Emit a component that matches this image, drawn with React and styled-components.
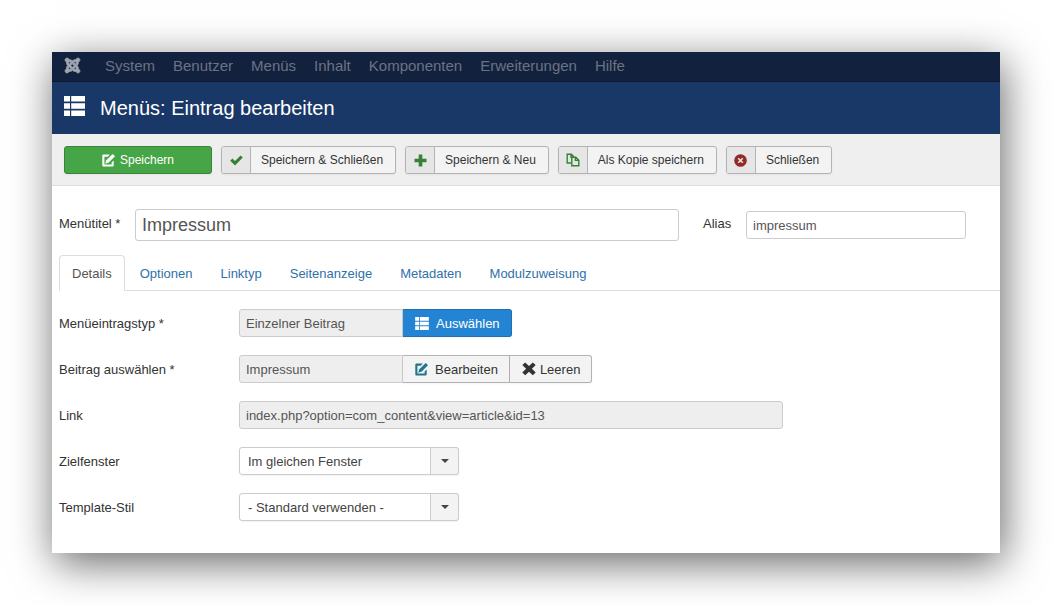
import React from "react";
import styled, { createGlobalStyle } from "styled-components";
import { FaJoomla } from "react-icons/fa";

const GlobalStyle = createGlobalStyle`
  *, *::before, *::after {
    box-sizing: border-box;
  }
  body {
    margin: 0;
    background: #fff;
    color: #333;
    font: 13px/19px "Liberation Sans", Arial, sans-serif;
  }
  button, input, select {
    font: inherit;
    margin: 0;
  }
`;

const Page = styled.div`
  padding: 52px;
`;

const Frame = styled.div`
  background: #fff;
  box-shadow: 3px 10px 40px rgba(0, 0, 0, 0.6);
`;

const Navbar = styled.nav`
  display: flex;
  align-items: center;
  gap: 18px;
  height: 30px;
  padding: 0 12px 2px;
  background: #12223e;
  border-bottom: 1px solid #0b1830;
`;

const Brand = styled.a`
  display: flex;
  margin-right: 6px;
  color: #a0a6b2;
  font-size: 17px;

  svg {
    overflow: visible;
    stroke: currentColor;
    stroke-width: 24px;
  }
`;

const NavLink = styled.a`
  color: #6b7382;
  font-size: 15px;
  line-height: 20px;
  text-decoration: none;
`;

const Header = styled.header`
  display: flex;
  align-items: center;
  gap: 15px;
  height: 52px;
  padding: 0 12px;
  background: #1a3867;
  color: #fff;

  svg {
    margin-bottom: 4px;
  }
`;

const Title = styled.h1`
  margin: 0;
  font-size: 20px;
  font-weight: normal;
  line-height: 24px;
`;

const Toolbar = styled.div`
  display: flex;
  flex-wrap: wrap;
  gap: 9px;
  padding: 12px 12px 11px;
  background: #efefef;
  border-bottom: 1px solid #dedede;
`;

const Button = styled.button`
  display: inline-flex;
  align-items: center;
  height: 28px;
  padding: 0;
  border: 1px solid #b3b3b3;
  border-radius: 3px;
  background: #f3f3f3;
  color: #333;
  box-shadow: 0 1px 2px rgba(0, 0, 0, 0.05);
  cursor: pointer;
`;

const ToolbarButton = styled(Button)`
  font-size: 12px;
`;

const SaveButton = styled(ToolbarButton)`
  justify-content: center;
  gap: 5px;
  width: 148px;
  border-color: #398439;
  background: #46a546;
  color: #fff;
`;

const ButtonIcon = styled.span`
  display: flex;
  align-items: center;
  justify-content: center;
  align-self: stretch;
  width: 29px;
  border-right: 1px solid #b3b3b3;
  border-radius: 2px 0 0 2px;
  background: #e6e6e6;
  color: ${(props) => props.$color};
`;

const ButtonText = styled.span`
  padding: 0 12px 0 10px;
`;

const TitleRow = styled.div`
  display: flex;
  align-items: center;
  padding: 23px 7px 14px;
`;

const TitleLabel = styled.label`
  flex: none;
  width: 76px;
  padding-bottom: 3px;
`;

const AliasLabel = styled(TitleLabel)`
  width: 43px;
  margin-left: 24px;
`;

const Input = styled.input`
  flex: 0 1 ${(props) => props.$width}px;
  min-width: 0;
  height: 28px;
  padding: 0 6px;
  border: 1px solid #ccc;
  border-radius: 3px;
  background: #fff;
  color: #555;

  &:read-only {
    background: #eee;
  }
`;

const LargeInput = styled(Input)`
  height: 32px;
  font-size: 18px;
`;

const Tabs = styled.div`
  display: flex;
  gap: 2px;
  margin-left: 7px;
  border-bottom: 1px solid #ddd;
`;

const Tab = styled.button`
  height: 36px;
  margin-bottom: -1px;
  padding: 1px 12px 0;
  border: 1px solid ${(props) => (props.$active ? "#ddd" : "transparent")};
  border-bottom-color: ${(props) => (props.$active ? "#fff" : "transparent")};
  border-radius: 4px 4px 0 0;
  background: ${(props) => (props.$active ? "#fff" : "transparent")};
  color: ${(props) => (props.$active ? "#555" : "#3071a9")};
  cursor: pointer;
`;

const Fields = styled.div`
  display: flex;
  flex-direction: column;
  gap: 18px;
  padding: 18px 7px 32px;
`;

const Row = styled.div`
  display: flex;
  align-items: center;
`;

const RowLabel = styled.label`
  flex: none;
  width: 180px;
  padding-top: 1px;
`;

const GroupInput = styled(Input)`
  border-radius: 3px 0 0 3px;
`;

const GroupButton = styled(Button)`
  gap: ${(props) => (props.$tight ? 4 : 7)}px;
  padding: 0 11px 0 12px;
  border-left: 0;
  border-radius: ${(props) => (props.$last ? "0 3px 3px 0" : "0")};
`;

const SelectButton = styled(GroupButton)`
  border-color: #1f6fb2;
  background: #2384d3;
  color: #fff;
`;

const SelectBox = styled.div`
  display: grid;
  grid-template-columns: 1fr 29px;
  flex: 0 1 220px;
  height: 28px;
  border-radius: 3px;
  box-shadow: 0 1px 2px rgba(0, 0, 0, 0.05);
`;

const Select = styled.select`
  grid-area: 1 / 1 / 2 / 3;
  appearance: none;
  padding: 1px 36px 0 8px;
  border: 1px solid #ccc;
  border-radius: 3px;
  background: #fff;
  color: #444;
`;

const SelectArrow = styled.span`
  grid-area: 1 / 2;
  display: flex;
  align-items: center;
  justify-content: center;
  border: 1px solid #ccc;
  border-radius: 0 3px 3px 0;
  background: #f3f3f3;
  pointer-events: none;
`;

const ListIcon = ({ width, height }) => (
  <svg width={width} height={height} viewBox="0 0 21 20" fill="currentColor">
    <path d="M0 0h6v5.6H0zM7.2 0H21v5.6H7.2zM0 7.2h6v5.6H0zM7.2 7.2H21v5.6H7.2zM0 14.4h6V20H0zM7.2 14.4H21V20H7.2z" />
  </svg>
);

const EditIcon = ({ color = "currentColor" }) => (
  <svg width="13" height="13" viewBox="0 0 13 13" fill={color}>
    <path d="M7.8.6H1.5Q.3.6.3 1.8v9.4q0 1.2 1.2 1.2h9q1.2 0 1.2-1.2V6.4L9.6 8.5v1.9H2.4V2.7h3.4z" />
    <path d="M10.7 0 13 2.3 6.8 8.6 3.2 9.7l1.1-3.5z" />
  </svg>
);

const CheckIcon = () => (
  <svg width="13" height="11" viewBox="0 0 13 11" fill="currentColor">
    <path d="M.2 5.7 2.4 3.5l2.6 2.4L10.6.4l2.2 2.1L5 10.4z" />
  </svg>
);

const PlusIcon = () => (
  <svg width="13" height="13" viewBox="0 0 13 13" fill="currentColor">
    <path d="M4.7.5h3.6v4.2h4.2v3.6H8.3v4.2H4.7V8.3H.5V4.7h4.2z" />
  </svg>
);

const CopyIcon = () => (
  <svg
    width="14"
    height="14"
    viewBox="0 0 14 14"
    fill="none"
    stroke="currentColor"
    strokeWidth="1.4"
  >
    <path d="M5.3 10H1.2V1.2h4.2l2.8 2.7M5 1.2v3h3.2" />
    <path d="M5.8 10V4.2M8.2 3.9v.4h1.6l3 2.9v5.6h-7V9.5M9.4 4.2v3.2h3.4" />
  </svg>
);

const CancelIcon = () => (
  <svg width="13" height="13" viewBox="0 0 13 13">
    <circle cx="6.5" cy="6.5" r="6.3" fill="currentColor" />
    <path
      d="m4.2 4.2 4.6 4.6M8.8 4.2 4.2 8.8"
      stroke="#e6e6e6"
      strokeWidth="1.6"
    />
  </svg>
);

const RemoveIcon = () => (
  <svg width="14" height="14" viewBox="0 0 14 14" fill="currentColor">
    <path d="M3.2.4 7 4 10.8.4l2.9 2.7L9.9 6.8l3.8 3.7-2.9 2.8L7 9.7l-3.8 3.6-2.9-2.8 3.8-3.7L.3 3.1z" />
  </svg>
);

const CaretIcon = () => (
  <svg width="8" height="4" viewBox="0 0 8 4">
    <path d="M0 0h8L4 4z" fill="#444" />
  </svg>
);

const navItems = [
  "System",
  "Benutzer",
  "Menüs",
  "Inhalt",
  "Komponenten",
  "Erweiterungen",
  "Hilfe",
];

const tabs = [
  "Details",
  "Optionen",
  "Linktyp",
  "Seitenanzeige",
  "Metadaten",
  "Modulzuweisung",
];

const actions = [
  { text: "Speichern & Schließen", icon: <CheckIcon />, color: "#378137" },
  { text: "Speichern & Neu", icon: <PlusIcon />, color: "#378137" },
  { text: "Als Kopie speichern", icon: <CopyIcon />, color: "#378137" },
  { text: "Schließen", icon: <CancelIcon />, color: "#942a25" },
];

const SelectField = ({ id, label, value }) => (
  <Row>
    <RowLabel htmlFor={id}>{label}</RowLabel>
    <SelectBox>
      <Select id={id}>
        <option>{value}</option>
      </Select>
      <SelectArrow>
        <CaretIcon />
      </SelectArrow>
    </SelectBox>
  </Row>
);

const App = () => {
  const [activeTab, setActiveTab] = React.useState("Details");

  return (
    <Page>
      <GlobalStyle />
      <Frame>
        <Navbar>
          <Brand href="#" aria-label="Joomla">
            <FaJoomla />
          </Brand>
          {navItems.map((item) => (
            <NavLink href="#" key={item}>
              {item}
            </NavLink>
          ))}
        </Navbar>
        <Header>
          <ListIcon width={21} height={20} />
          <Title>Menüs: Eintrag bearbeiten</Title>
        </Header>
        <Toolbar>
          <SaveButton type="button">
            <EditIcon />
            Speichern
          </SaveButton>
          {actions.map(({ text, icon, color }) => (
            <ToolbarButton type="button" key={text}>
              <ButtonIcon $color={color}>{icon}</ButtonIcon>
              <ButtonText>{text}</ButtonText>
            </ToolbarButton>
          ))}
        </Toolbar>
        <TitleRow>
          <TitleLabel htmlFor="title">Menütitel *</TitleLabel>
          <LargeInput id="title" $width={544} defaultValue="Impressum" />
          <AliasLabel htmlFor="alias">Alias</AliasLabel>
          <Input id="alias" $width={220} defaultValue="impressum" />
        </TitleRow>
        <Tabs role="tablist">
          {tabs.map((tab) => (
            <Tab
              type="button"
              role="tab"
              key={tab}
              aria-selected={tab === activeTab}
              $active={tab === activeTab}
              onClick={() => setActiveTab(tab)}
            >
              {tab}
            </Tab>
          ))}
        </Tabs>
        <Fields>
          <Row>
            <RowLabel htmlFor="type">Menüeintragstyp *</RowLabel>
            <GroupInput id="type" $width={164} readOnly value="Einzelner Beitrag" />
            <SelectButton type="button" $last>
              <ListIcon width={14} height={13} />
              Auswählen
            </SelectButton>
          </Row>
          <Row>
            <RowLabel htmlFor="article">Beitrag auswählen *</RowLabel>
            <GroupInput id="article" $width={164} readOnly value="Impressum" />
            <GroupButton type="button">
              <EditIcon color="#24748c" />
              Bearbeiten
            </GroupButton>
            <GroupButton type="button" $last $tight>
              <RemoveIcon />
              Leeren
            </GroupButton>
          </Row>
          <Row>
            <RowLabel htmlFor="link">Link</RowLabel>
            <Input
              id="link"
              $width={544}
              readOnly
              value="index.php?option=com_content&view=article&id=13"
            />
          </Row>
          <SelectField id="target" label="Zielfenster" value="Im gleichen Fenster" />
          <SelectField id="style" label="Template-Stil" value="- Standard verwenden -" />
        </Fields>
      </Frame>
    </Page>
  );
};

export default App;
